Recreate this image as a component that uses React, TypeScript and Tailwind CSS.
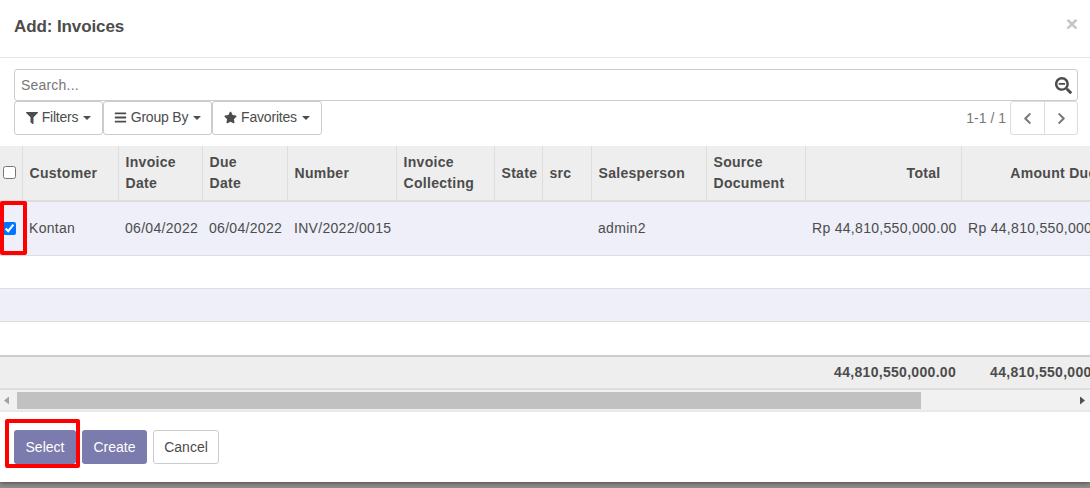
import { FaBars, FaChevronLeft, FaChevronRight, FaFilter, FaSearchMinus, FaStar } from 'react-icons/fa';

const COLUMNS = [
    { label: 'Customer', width: 96 },
    { label: 'Invoice Date', width: 84 },
    { label: 'Due Date', width: 85 },
    { label: 'Number', width: 109 },
    { label: 'Invoice Collecting', width: 98 },
    { label: 'State', width: 48 },
    { label: 'src', width: 49 },
    { label: 'Salesperson', width: 115 },
    { label: 'Source Document', width: 99 },
    { label: 'Total', width: 156, right: true },
    { label: 'Amount Due', width: 156, right: true },
];

const ROW_CELLS = ['Kontan', '06/04/2022', '06/04/2022', 'INV/2022/0015', '', '', '', 'admin2', ''];

function Caret() {
    return <span className="ml-[5px] inline-block border-x-[4px] border-t-[4px] border-x-transparent border-t-[#4c4c4c] align-middle" />;
}

function FilterButton({ icon, label, width }: { icon: React.ReactNode; label: string; width: string }) {
    return (
        <button
            type="button"
            className={`flex h-[34px] items-center justify-center rounded-[3px] border border-[#ccc] bg-white pb-[1px] text-[14px] tracking-[-0.2px] text-[#4c4c4c] ${width}`}
        >
            {icon}
            <span className="ml-1">{label}</span>
            <Caret />
        </button>
    );
}

export default function App() {
    return (
        <div className="h-[488px] w-[1090px] overflow-hidden bg-[#8f8f8f] font-['Liberation_Sans',Arial,sans-serif] text-[14px] text-[#4c4c4c]">
            <div className="relative h-[482px] w-[1090px] overflow-hidden bg-white shadow-[0_1px_5px_rgba(0,0,0,0.5)]">
                {/* Header */}
                <div className="flex h-[58px] items-center justify-between border-b border-[#e5e5e5] pb-[4px] pl-[14px] pr-[12px]">
                    <h4 className="text-[17px] leading-none font-bold tracking-[-0.1px] text-[#4c4c4c]">Add: Invoices</h4>
                    <span className="mt-[-6px] text-[21px] leading-none font-bold text-[#c4c4c4]">×</span>
                </div>

                {/* Search + controls */}
                <div className="pl-[14px] pr-[12px] pt-[11px]">
                    <div className="flex h-[32px] items-center justify-between rounded-[3px] border border-[#ccc] pl-[6px] pr-[5px]">
                        <span className="text-[14px] tracking-[0.2px] text-[#777]">Search...</span>
                        <FaSearchMinus className="text-[17px] text-[#4c4c4c]" />
                    </div>
                    <div className="flex h-[34px] items-center justify-between">
                        <div className="flex">
                            <FilterButton icon={<FaFilter className="text-[12px]" />} label="Filters" width="w-[89px]" />
                            <FilterButton icon={<FaBars className="text-[13px]" />} label="Group By" width="w-[109px]" />
                            <FilterButton icon={<FaStar className="text-[13px]" />} label="Favorites" width="w-[110px]" />
                        </div>
                        <div className="flex items-center">
                            <span className="mr-1 text-[#777]">1-1 / 1</span>
                            <div className="flex h-[34px] w-[68px] rounded-[3px] border border-[#ddd]">
                                <span className="flex w-[34px] items-center justify-center border-r border-[#ddd] text-[#777]">
                                    <FaChevronLeft className="text-[13px]" />
                                </span>
                                <span className="flex flex-1 items-center justify-center text-[#777]">
                                    <FaChevronRight className="text-[13px]" />
                                </span>
                            </div>
                        </div>
                    </div>
                </div>

                {/* Table */}
                <div className="mt-[11px] overflow-hidden">
                    <table className="w-[1117px] table-fixed border-collapse tracking-[0.3px]">
                        <colgroup>
                            <col className="w-[22px]" />
                            {COLUMNS.map(col => (
                                <col key={col.label} style={{ width: col.width }} />
                            ))}
                        </colgroup>
                        <thead>
                            <tr className="h-[55px] border-b-2 border-[#ddd] bg-[#eee]">
                                <th className="border-r border-[#ddd] p-0">
                                    <input type="checkbox" className="mt-[-2px] block h-[13px] w-[13px] translate-x-[3px]" readOnly />
                                </th>
                                {COLUMNS.map(col => (
                                    <th
                                        key={col.label}
                                        className={`border-r border-[#ddd] pl-[7px] pr-[20px] text-[14px] leading-[21px] font-bold text-[#4c4c4c] ${col.right ? 'text-right' : 'text-left'}`}
                                    >
                                        {col.label}
                                    </th>
                                ))}
                            </tr>
                        </thead>
                        <tbody>
                            <tr className="h-[54px] border-b border-[#ddd] bg-[#eeeff8]">
                                <td className="p-0">
                                    <input type="checkbox" checked readOnly className="block h-[13px] w-[13px] translate-x-[3px] accent-[#0075ff]" />
                                </td>
                                {ROW_CELLS.map((cell, i) => (
                                    <td key={i} className="whitespace-nowrap pl-[7px] pr-[5px]">{cell}</td>
                                ))}
                                <td className="whitespace-nowrap pl-[7px] pr-[5px] text-right">Rp 44,810,550,000.00</td>
                                <td className="whitespace-nowrap pl-[7px] pr-[5px] text-right">Rp 44,810,550,000.00</td>
                            </tr>
                            <tr className="h-[33px] border-b border-[#ddd] bg-white"><td colSpan={12} /></tr>
                            <tr className="h-[33px] border-b border-[#ddd] bg-[#eeeff8]"><td colSpan={12} /></tr>
                            <tr className="h-[35px] bg-white"><td colSpan={12} /></tr>
                        </tbody>
                        <tfoot>
                            <tr className="h-[33px] border-y-2 border-t-[#ccc] border-b-[#ddd] bg-[#eee] font-bold">
                                <td colSpan={10} />
                                <td className="whitespace-nowrap pl-[7px] pr-[5px] text-right">44,810,550,000.00</td>
                                <td className="whitespace-nowrap pl-[7px] pr-[5px] text-right">44,810,550,000.00</td>
                            </tr>
                        </tfoot>
                    </table>
                </div>

                {/* Horizontal scrollbar */}
                <div className="flex h-[22px] items-center justify-between border-b-2 border-[#e8e8e8] bg-[#f1f1f1]">
                    <svg width="17" height="17" viewBox="0 0 17 17" className="shrink-0">
                        <path d="M9 4.5v8l-5-4z" fill="#a3a3a3" />
                    </svg>
                    <div className="h-[17px] w-[904px] bg-[#c1c1c1]" />
                    <div className="flex-1" />
                    <svg width="17" height="17" viewBox="0 0 17 17" className="shrink-0">
                        <path d="M7 4.5v8l5-4z" fill="#505050" />
                    </svg>
                </div>

                {/* Footer */}
                <div className="flex gap-[6px] pl-[14px] pt-[18px]">
                    <button type="button" className="h-[34px] w-[62px] rounded-[3px] bg-[#7c7bad] text-white">Select</button>
                    <button type="button" className="h-[34px] w-[65px] rounded-[3px] bg-[#7c7bad] text-white">Create</button>
                    <button type="button" className="h-[34px] w-[66px] rounded-[3px] border border-[#ccc] bg-white text-[#4c4c4c]">Cancel</button>
                </div>

                {/* Red annotations */}
                <div className="pointer-events-none absolute top-[201px] left-0 h-[54px] w-[27px] rounded-[2px] border-4 border-[#fe0000]" />
                <div className="pointer-events-none absolute top-[419px] left-[5px] h-[49px] w-[75px] rounded-[2px] border-4 border-[#fe0000]" />
            </div>
        </div>
    );
}
